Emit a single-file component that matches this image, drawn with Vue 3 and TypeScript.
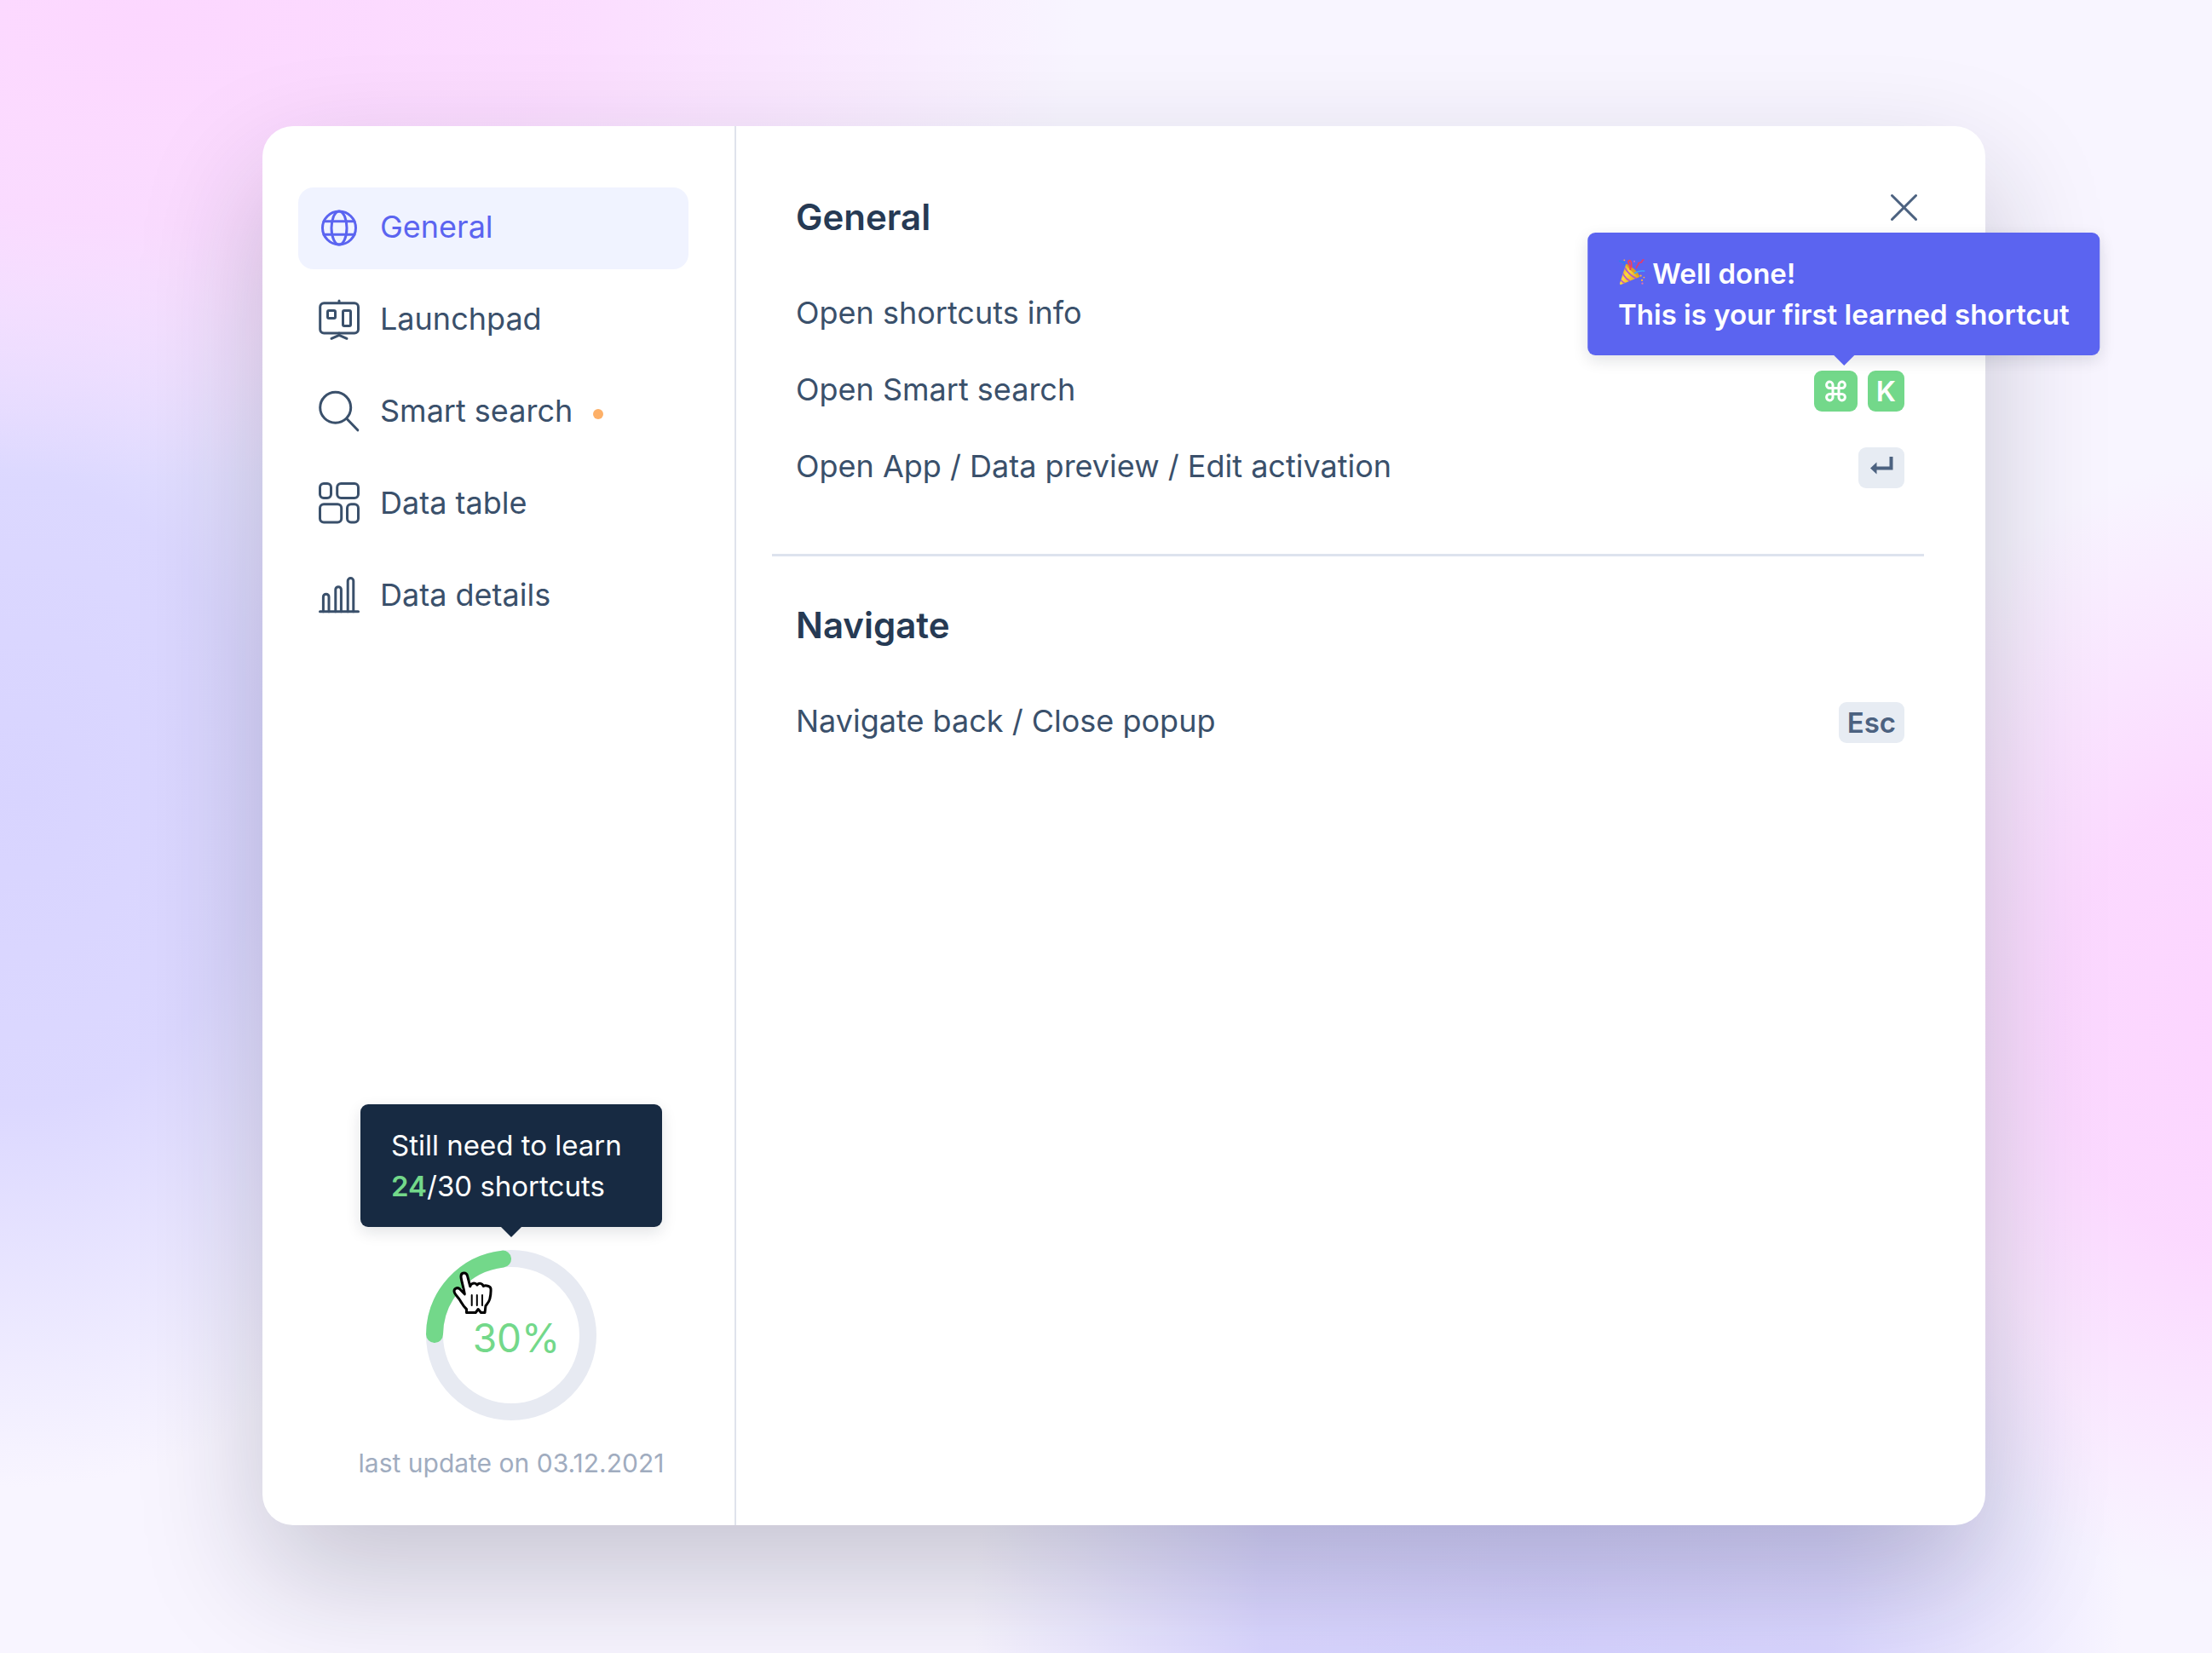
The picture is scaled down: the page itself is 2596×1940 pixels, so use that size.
<script setup lang="ts">
import { ref } from 'vue'

type IconName = 'globe' | 'board' | 'search' | 'grid' | 'bars'

interface NavItem {
  label: string
  icon: IconName
  unseen?: boolean
}

interface Shortcut {
  label: string
  keys: string[]
  learned?: boolean
}

interface Section {
  title: string
  shortcuts: Shortcut[]
}

const navItems: NavItem[] = [
  { label: 'General', icon: 'globe' },
  { label: 'Launchpad', icon: 'board' },
  { label: 'Smart search', icon: 'search', unseen: true },
  { label: 'Data table', icon: 'grid' },
  { label: 'Data details', icon: 'bars' },
]

const active = ref('General')

const sections: Section[] = [
  {
    title: 'General',
    shortcuts: [
      { label: 'Open shortcuts info', keys: [] },
      { label: 'Open Smart search', keys: ['cmd', 'K'], learned: true },
      { label: 'Open App / Data preview / Edit activation', keys: ['enter'] },
    ],
  },
  {
    title: 'Navigate',
    shortcuts: [{ label: 'Navigate back / Close popup', keys: ['Esc'] }],
  },
]
</script>

<template>
  <div class="page">
    <div class="dialog" role="dialog" aria-label="Shortcuts">
      <aside class="sidebar">
        <nav class="nav">
          <button
            v-for="item in navItems"
            :key="item.label"
            type="button"
            class="nav-item"
            :class="{ active: item.label === active }"
            @click="active = item.label"
          >
            <svg class="nav-icon" viewBox="0 0 48 48" aria-hidden="true">
              <template v-if="item.icon === 'globe'">
                <circle cx="24" cy="23.5" r="19.5" />
                <ellipse cx="24" cy="23.5" rx="9" ry="19.5" />
                <path d="M6 15.8h36M6 31.2h36" />
              </template>
              <template v-else-if="item.icon === 'board'">
                <rect x="1.7" y="3.7" width="44.8" height="35.4" rx="4.5" />
                <path d="M24 3.5V1M15 45.300l9-4 9 4M24 39v2" />
                <rect x="10.5" y="12.5" width="9" height="9" rx="1.5" />
                <rect x="28.5" y="12.5" width="9" height="18" rx="1.5" />
              </template>
              <template v-else-if="item.icon === 'search'">
                <circle cx="19.7" cy="18.3" r="18" />
                <path d="M33 31.5l12.8 13.3" />
              </template>
              <template v-else-if="item.icon === 'grid'">
                <rect x="1.5" y="-0.5" width="13" height="17" rx="4.5" />
                <rect x="21.7" y="-0.5" width="24.8" height="17" rx="4.5" />
                <rect x="1.5" y="23.8" width="25.2" height="21.2" rx="4.5" />
                <rect x="33.5" y="23.8" width="13" height="21.2" rx="4.5" />
              </template>
              <template v-else>
                <path d="M1.5 41.7h45" />
                <path d="M5.4 41.7V24.5a3.3 3.3 0 0 1 6.6 0v17.2" />
                <path d="M19.8 41.7V16a3.3 3.3 0 0 1 6.6 0v25.7" />
                <path d="M34.2 41.7V5.8a3.3 3.3 0 0 1 6.6 0v35.9" />
              </template>
            </svg>
            <span class="label">{{ item.label }}</span>
            <span v-if="item.unseen" class="dot"></span>
          </button>
        </nav>

        <div class="progress">
          <div class="ring">
            <svg viewBox="0 0 200 200" aria-hidden="true">
              <circle class="ring-track" cx="100" cy="100" r="90" />
              <path class="ring-value" d="M10 99A90 90 0 0 1 90 10.6" />
            </svg>
            <span class="ring-label">30%</span>
            <div class="tooltip tooltip-dark" role="tooltip">
              Still need to learn<br /><strong>24</strong>/30 shortcuts
            </div>
            <svg class="cursor" viewBox="0 0 48 52" aria-hidden="true">
              <path
                d="M16.500 48.500v-4C12.500 41 11 37.500 8.500 33.500 6.500 30 2 26.800 2 23.300c0-3 3.300-4.800 6.300-2.800l6 6.300C13 18 10.500 12 10 6.500 9.800 1 16.200.6 17.600 5.600l3.200 12.200c.4-4 5.800-5 8.200-1.800 2-2.600 6-2.200 7.300 1.500 2.500-1.500 8.300-.3 8.700 3 .3 4.500-.2 8-1.200 12-.8 3.500-2.800 5.500-4.800 8l-1 8h-4.500l-3.300-4-3 4z"
              />
              <path class="fingers" d="M22.700 28v12M28.800 28v12M35 28v12" />
            </svg>
          </div>
          <p class="updated">last update on 03.12.2021</p>
        </div>
      </aside>

      <main class="content">
        <section v-for="(section, index) in sections" :key="section.title" class="section">
          <header class="section-head">
            <h2>{{ section.title }}</h2>
            <button v-if="index === 0" type="button" class="close" aria-label="Close">
              <svg viewBox="0 0 48 48" aria-hidden="true">
                <path d="M10.500 9.500l28 28M38.500 9.500l-28 28" />
              </svg>
            </button>
          </header>
          <ul class="shortcuts">
            <li v-for="shortcut in section.shortcuts" :key="shortcut.label">
              <span class="label">{{ shortcut.label }}</span>
              <span v-if="shortcut.keys.length" class="keys" :class="{ learned: shortcut.learned }">
                <kbd v-for="key in shortcut.keys" :key="key">
                  <svg
                    v-if="key === 'cmd'"
                    class="key-cmd"
                    viewBox="-2 -1 31 28"
                    role="img"
                    aria-label="Command"
                  >
                    <path
                      d="M10 9.500H6.200A3.700 3.700 0 1 1 10 5.800V20.200A3.700 3.700 0 1 1 6.200 16.500H20.800A3.700 3.700 0 1 1 17 20.200V5.800A3.700 3.700 0 1 1 20.800 9.500z"
                    />
                  </svg>
                  <svg
                    v-else-if="key === 'enter'"
                    class="key-enter"
                    viewBox="0 0 34 28"
                    role="img"
                    aria-label="Enter"
                  >
                    <path class="line" d="M28.500 1v13.500H10" />
                    <path class="head" d="M4 14.500L11.500 7.500v14z" />
                  </svg>
                  <template v-else>{{ key }}</template>
                </kbd>
                <span v-if="shortcut.learned" class="tooltip tooltip-accent" role="tooltip">
                  <svg class="party" viewBox="0 0 34 34" role="img" aria-label="Party popper">
                    <defs>
                      <linearGradient id="cone" x1="0" y1="0" x2="1" y2="0.8">
                        <stop offset="0" stop-color="#c8911c" />
                        <stop offset="0.45" stop-color="#ffd83d" />
                        <stop offset="1" stop-color="#d99a1c" />
                      </linearGradient>
                      <clipPath id="coneClip"><path d="M9.500 7.500C15 9 23 17 26.500 23.500L3.500 33Q1.500 33.500 2 31z" /></clipPath>
                    </defs>
                    <path d="M9.500 7.500C15 9 23 17 26.500 23.500L3.500 33Q1.500 33.500 2 31z" fill="url(#cone)" />
                    <g clip-path="url(#coneClip)" fill="none" stroke="#b558c8" stroke-width="1.8">
                      <path d="M8 12Q14 22 24 26" />
                      <path d="M5 18Q9 27 18 30" />
                      <path d="M2 25Q5 31 11 32" />
                    </g>
                    <path d="M9.500 7.500C14 7.500 26 18 26.500 23.500 22 22 11 12 9.500 7.500z" fill="#dba024" />
                    <path d="M15 15C16 10 13 8 12.500 5.500 12 3 14 2 15.500 4S16 8 16.500 12" fill="none" stroke="#f0405e" stroke-width="2" />
                    <path d="M22.500 13c-1-3 3-4 2.500-6s3-1 4-2 0-3 3-3" fill="none" stroke="#e83a68" stroke-width="1.8" />
                    <path d="M1 4c3-2 3 2 5 1s2 2 1 4" fill="none" stroke="#2f7df0" stroke-width="1.800" />
                    <path d="M20 19c5-4 8-3 13-3" fill="none" stroke="#3fa4ff" stroke-width="1.800" />
                    <g fill="#ffb13b">
                      <circle cx="7.500" cy="2.500" r="1" />
                      <circle cx="28" cy="22" r="1.200" />
                      <circle cx="32" cy="24" r="1" />
                      <circle cx="29.500" cy="27.500" r="1.200" />
                    </g>
                    <circle cx="30" cy="31.500" r="1.200" fill="#e46fb0" />
                    <circle cx="20" cy="4" r="1" fill="#e46fb0" />
                  </svg>
                  Well done!<br />This is your first learned shortcut
                </span>
              </span>
            </li>
          </ul>
        </section>
      </main>
    </div>
  </div>
</template>

<style>
body {
  margin: 0;
}
</style>

<style scoped>
.page {
  box-sizing: border-box;
  display: flex;
  min-height: 100vh;
  padding: 148px 266px 150px 308px;
  overflow: hidden;
  font-family: Inter, "Liberation Sans", sans-serif;
  font-size: 36px;
  line-height: 48px;
  color: #3a506b;
  background:
    radial-gradient(ellipse 42% 28% at 7% 1%, #fcd7ff 0%, #fcd7ffd0 45%, #fcd7ff00 100%),
    radial-gradient(ellipse 24% 42% at 1% 48%, #d8d4ff 0%, #d8d4ffe0 45%, #d8d4ff00 100%),
    radial-gradient(ellipse 20% 34% at 101% 62%, #fcd5ff 0%, #fcd5ffe0 40%, #fcd5ff00 100%),
    radial-gradient(ellipse 26% 32% at 70% 97%, #d6d2ff 0%, #d6d2ffe0 50%, #d6d2ff00 100%),
    #f8f5ff;
}

.dialog {
  display: flex;
  flex: 1;
  min-width: 0;
  border-radius: 36px;
  background: #fff;
  box-shadow: 0 60px 144px rgba(22, 26, 48, 0.22);
}

.sidebar {
  box-sizing: border-box;
  display: flex;
  flex: none;
  flex-direction: column;
  justify-content: space-between;
  width: 556px;
  padding: 72px 12px 52px 42px;
  border-right: 2px solid #dfe3ec;
}

.nav {
  display: flex;
  flex-direction: column;
  gap: 12px;
  margin-right: 42px;
}

.nav-item {
  display: flex;
  align-items: center;
  gap: 24px;
  height: 96px;
  padding: 0 24px;
  border: 0;
  border-radius: 18px;
  background: none;
  color: #3a506b;
  font: inherit;
  cursor: pointer;
}

.nav-item.active {
  background: #f0f3ff;
  color: #5b64f0;
}

.nav-icon {
  width: 48px;
  height: 48px;
  overflow: visible;
  fill: none;
  stroke: currentColor;
  stroke-width: 3;
  stroke-linecap: round;
  stroke-linejoin: round;
}

.label {
  padding-bottom: 4px;
}

.dot {
  width: 12px;
  height: 12px;
  margin-top: 4px;
  border-radius: 50%;
  background: #fdb068;
}

.progress {
  display: flex;
  flex-direction: column;
  align-items: center;
  gap: 29px;
}

.ring {
  position: relative;
  display: grid;
  place-items: center;
  width: 200px;
  height: 200px;
}

.ring > svg:first-child {
  grid-area: 1 / 1;
  width: 200px;
  height: 200px;
  fill: none;
  stroke-width: 20;
}

.ring-track {
  stroke: #e7eaf2;
}

.ring-value {
  stroke: #73d88a;
  stroke-linecap: round;
}

.ring-label {
  grid-area: 1 / 1;
  padding: 6px 0 0 12px;
  color: #73d88a;
  font-size: 46px;
}

.cursor {
  position: absolute;
  top: 25px;
  left: 31px;
  width: 48px;
  height: 52px;
  fill: #fff;
  stroke: #000;
  stroke-width: 3;
  stroke-linecap: round;
  stroke-linejoin: round;
}

.fingers {
  stroke-width: 2;
}

.updated {
  margin: 0;
  color: #a0acbf;
  font-size: 30px;
  line-height: 42px;
}

.content {
  flex: 1;
  min-width: 0;
  padding: 72px 72px 72px 42px;
}

.section + .section {
  margin-top: 77px;
  padding-top: 46px;
  border-top: 3px solid #dde3ee;
}

.section-head {
  display: flex;
  align-items: flex-start;
  justify-content: space-between;
  padding-left: 28px;
}

h2 {
  margin: 0;
  padding-top: 11px;
  color: #263a54;
  font-size: 42px;
  font-weight: 600;
  line-height: 48px;
}

.close {
  width: 48px;
  height: 48px;
  padding: 0;
  border: 0;
  background: none;
  cursor: pointer;
}

.close svg {
  display: block;
  fill: none;
  stroke: #4c6280;
  stroke-width: 3;
  stroke-linecap: round;
}

.shortcuts {
  display: flex;
  flex-direction: column;
  gap: 42px;
  margin: 0;
  padding: 66px 23px 0 28px;
  list-style: none;
}

.shortcuts li {
  display: flex;
  align-items: center;
  justify-content: space-between;
  height: 48px;
}

.keys {
  position: relative;
  display: flex;
  gap: 12px;
}

kbd {
  display: flex;
  align-items: center;
  justify-content: center;
  height: 48px;
  padding: 0 10px;
  border-radius: 9px;
  background: #e7ecf3;
  color: #4c6280;
  font-family: inherit;
  font-size: 33px;
  font-weight: 600;
}

.learned kbd {
  background: #73d88a;
  color: #fff;
}

.key-cmd {
  width: 31px;
  height: 28px;
  fill: none;
  stroke: currentColor;
  stroke-width: 3;
}

.key-enter {
  width: 34px;
  height: 28px;
}

.key-enter .line {
  fill: none;
  stroke: currentColor;
  stroke-width: 4;
}

.key-enter .head {
  fill: currentColor;
}

.tooltip {
  position: absolute;
  left: 50%;
  box-sizing: border-box;
  padding: 24px 36px;
  border-radius: 9px;
  color: #fff;
  font-size: 33px;
  line-height: 48px;
  white-space: nowrap;
  transform: translateX(-50%);
  box-shadow: 0 6px 18px rgba(20, 24, 40, 0.12);
}

.tooltip::after {
  content: "";
  position: absolute;
  top: 100%;
  left: 50%;
  margin-left: -12px;
  border: 12px solid transparent;
  border-bottom-width: 0;
}

.tooltip-dark {
  bottom: calc(100% + 27px);
  min-width: 354px;
  background: #172a42;
}

.tooltip-dark::after {
  border-top-color: #172a42;
}

.tooltip-dark strong {
  color: #73d88a;
  font-weight: 600;
}

/* Centred between the first key's middle and the gap after it */
.tooltip-accent {
  bottom: calc(100% + 18px);
  left: 35px;
  background: #5b64f0;
  font-weight: 600;
}

.tooltip-accent::after {
  border-top-color: #5b64f0;
}

.party {
  width: 32px;
  height: 34px;
  vertical-align: -3px;
}
</style>
